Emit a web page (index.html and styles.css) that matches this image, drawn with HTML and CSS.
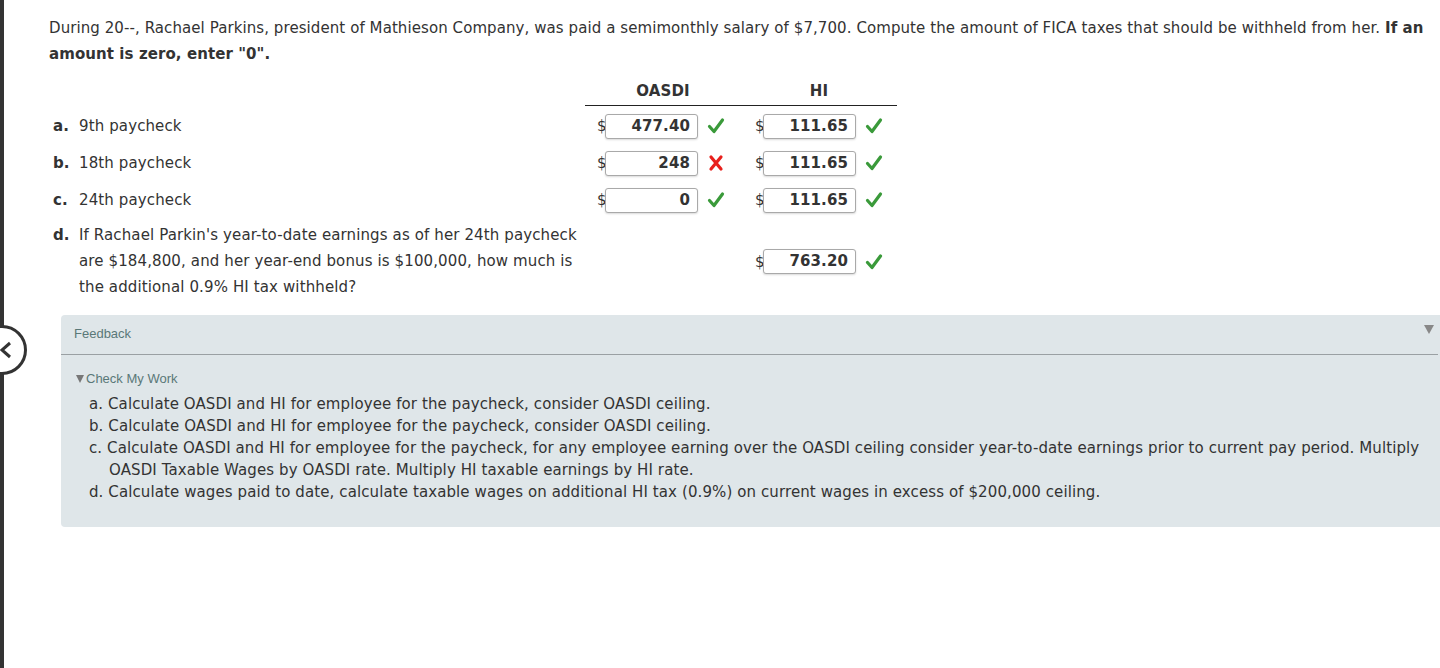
FILE: index.html
```html
<!DOCTYPE html>
<html>
<head>
<meta charset="utf-8">
<link rel="stylesheet" href="styles.css">
</head>
<body>
<div class="side-bar"></div>
<div class="side-toggle">
  <svg width="30" height="54" viewBox="0 0 30 54"><circle cx="2" cy="27" r="23.5" fill="#fff" stroke="#333" stroke-width="3"/><path d="M10 20 L2 27 L10 34" fill="none" stroke="#333" stroke-width="3"/></svg>
</div>
<main class="page">
  <p class="question">During 20--, Rachael Parkins, president of Mathieson Company, was paid a semimonthly salary of $7,700. Compute the amount of FICA taxes that should be withheld from her. <b>If an amount is zero, enter "0".</b></p>

  <table class="answers">
    <thead>
      <tr><th class="lbl"></th><th class="col">OASDI</th><th class="col">HI</th></tr>
    </thead>
    <tbody>
      <tr>
        <td class="lbl"><b>a.</b><span>9th paycheck</span></td>
        <td class="col"><div class="cell"><span class="dollar">$</span><span class="inp">477.40</span><svg class="mark" width="18" height="18" viewBox="0 0 18 18"><path d="M2.5 9.5 L7 14.5 L15.5 3" fill="none" stroke="#3a9a3a" stroke-width="3.2" stroke-linecap="round" stroke-linejoin="round"/></svg></div></td>
        <td class="col"><div class="cell"><span class="dollar">$</span><span class="inp">111.65</span><svg class="mark" width="18" height="18" viewBox="0 0 18 18"><path d="M2.5 9.5 L7 14.5 L15.5 3" fill="none" stroke="#3a9a3a" stroke-width="3.2" stroke-linecap="round" stroke-linejoin="round"/></svg></div></td>
      </tr>
      <tr>
        <td class="lbl"><b>b.</b><span>18th paycheck</span></td>
        <td class="col"><div class="cell"><span class="dollar">$</span><span class="inp">248</span><svg class="mark" width="18" height="18" viewBox="0 0 18 18"><path d="M4 3 L14 15 M14 3 L4 15" fill="none" stroke="#e8201c" stroke-width="3.2" stroke-linecap="round"/></svg></div></td>
        <td class="col"><div class="cell"><span class="dollar">$</span><span class="inp">111.65</span><svg class="mark" width="18" height="18" viewBox="0 0 18 18"><path d="M2.5 9.5 L7 14.5 L15.5 3" fill="none" stroke="#3a9a3a" stroke-width="3.2" stroke-linecap="round" stroke-linejoin="round"/></svg></div></td>
      </tr>
      <tr>
        <td class="lbl"><b>c.</b><span>24th paycheck</span></td>
        <td class="col"><div class="cell"><span class="dollar">$</span><span class="inp">0</span><svg class="mark" width="18" height="18" viewBox="0 0 18 18"><path d="M2.5 9.5 L7 14.5 L15.5 3" fill="none" stroke="#3a9a3a" stroke-width="3.2" stroke-linecap="round" stroke-linejoin="round"/></svg></div></td>
        <td class="col"><div class="cell"><span class="dollar">$</span><span class="inp">111.65</span><svg class="mark" width="18" height="18" viewBox="0 0 18 18"><path d="M2.5 9.5 L7 14.5 L15.5 3" fill="none" stroke="#3a9a3a" stroke-width="3.2" stroke-linecap="round" stroke-linejoin="round"/></svg></div></td>
      </tr>
      <tr class="tall">
        <td class="lbl"><b>d.</b><span>If Rachael Parkin's year-to-date earnings as of her 24th paycheck are $184,800, and her year-end bonus is $100,000, how much is the additional 0.9% HI tax withheld?</span></td>
        <td class="col"></td>
        <td class="col"><div class="cell"><span class="dollar">$</span><span class="inp">763.20</span><svg class="mark" width="18" height="18" viewBox="0 0 18 18"><path d="M2.5 9.5 L7 14.5 L15.5 3" fill="none" stroke="#3a9a3a" stroke-width="3.2" stroke-linecap="round" stroke-linejoin="round"/></svg></div></td>
      </tr>
    </tbody>
  </table>

  <section class="feedback">
    <div class="fb-head"><span>Feedback</span><span class="fb-arrow"></span></div>
    <div class="fb-body">
      <div class="cmw"><span class="tri"></span>Check My Work</div>
      <p class="hint">a. Calculate OASDI and HI for employee for the paycheck, consider OASDI ceiling.</p>
      <p class="hint">b. Calculate OASDI and HI for employee for the paycheck, consider OASDI ceiling.</p>
      <p class="hint">c. Calculate OASDI and HI for employee for the paycheck, for any employee earning over the OASDI ceiling consider year-to-date earnings prior to current pay period. Multiply OASDI Taxable Wages by OASDI rate. Multiply HI taxable earnings by HI rate.</p>
      <p class="hint">d. Calculate wages paid to date, calculate taxable wages on additional HI tax (0.9%) on current wages in excess of $200,000 ceiling.</p>
    </div>
  </section>
</main>
</body>
</html>
```

FILE: styles.css
```css
html, body {
  margin: 0;
  padding: 0;
  background: #fff;
  overflow: hidden;
}
body {
  font-family: "DejaVu Sans", Verdana, sans-serif;
  font-size: 15px;
  letter-spacing: 0.12px;
  color: #333;
  width: 1440px;
  height: 668px;
}
.side-bar {
  position: fixed;
  left: 0;
  top: 0;
  width: 4px;
  height: 668px;
  background: #333;
}
.side-toggle {
  position: fixed;
  left: 0;
  top: 323px;
  width: 30px;
  height: 54px;
}
.side-toggle svg { display: block; }
.page {
  padding: 15px 0 0 49px;
}
.question {
  margin: 0;
  line-height: 26px;
  padding-right: 0;
  letter-spacing: 0.08px;
}
.question b { font-weight: bold; }
.answers {
  border-collapse: collapse;
  margin-top: 0;
}
.answers th {
  font-weight: bold;
  height: 34px;
  padding: 0 0 4px;
  vertical-align: bottom;
  text-align: center;
}
.answers th.col {
  border-bottom: 1px solid #222;
  line-height: 20px;
  padding-bottom: 4px;
}
.answers td {
  padding: 0;
  vertical-align: middle;
}
.answers th.lbl, .answers td.lbl {
  width: 536px;
  padding-right: 0;
}
td.lbl {
  display: flex;
  height: 37px;
  align-items: center;
}
td.lbl b {
  width: 30px;
  flex: none;
  padding-left: 4px;
  box-sizing: border-box;
}
.answers th.col, .answers td.col {
  width: 156px;
}
tr.tall td.lbl {
  height: auto;
  align-items: flex-start;
  line-height: 26px;
  padding: 3px 8px 5px 0;
  box-sizing: border-box;
  width: 536px;
}
tr:first-child td { padding-top: 2px; }
tr:first-child td.lbl { padding-top: 2px; }
.cell {
  display: flex;
  align-items: center;
  padding-left: 12px;
}
.answers td.col:last-child .cell { padding-left: 14px; }
.dollar {
  width: 8px;
  color: #333;
}
.inp {
  width: 93px;
  height: 25px;
  box-sizing: border-box;
  border: 1px solid #a9a9a9;
  border-radius: 3px;
  box-shadow: 0 1px 2px rgba(0,0,0,0.15);
  text-align: right;
  font-weight: bold;
  line-height: 23px;
  padding-right: 7px;
  color: #333;
  background: #fff;
}
.mark {
  display: block;
  margin-left: 9px;
  flex: none;
}
.feedback {
  margin: 10px 0 0 12px;
  background: #dfe6e9;
  border-radius: 4px 0 0 4px;
  height: 212px;
  font-family: "Liberation Sans", Arial, sans-serif;
  letter-spacing: 0;
}
.fb-head {
  display: flex;
  justify-content: space-between;
  align-items: center;
  height: 38px;
  padding: 0 4px 1px 13px;
  border-bottom: 1px solid #9aa0a3;
  margin-right: 2px;
  font-size: 13px;
  color: #5a7878;
}
.fb-arrow {
  width: 0;
  height: 0;
  border-left: 5px solid transparent;
  border-right: 5px solid transparent;
  border-top: 9px solid #888;
  margin-top: -8px;
}
.fb-body {
  padding: 15px 0 0 15px;
}
.cmw {
  font-size: 13px;
  color: #5a7878;
  line-height: 18px;
  margin-bottom: 5px;
  display: flex;
  align-items: center;
}
.tri {
  width: 0;
  height: 0;
  border-left: 4px solid transparent;
  border-right: 4px solid transparent;
  border-top: 8px solid #777;
  margin-right: 2px;
}
.hint {
  margin: 0;
  font-family: "DejaVu Sans", Verdana, sans-serif;
  font-size: 15px;
  letter-spacing: 0.1px;
  line-height: 22px;
  color: #333;
  padding-left: 33px;
  text-indent: -20px;
  padding-right: 10px;
}
```
